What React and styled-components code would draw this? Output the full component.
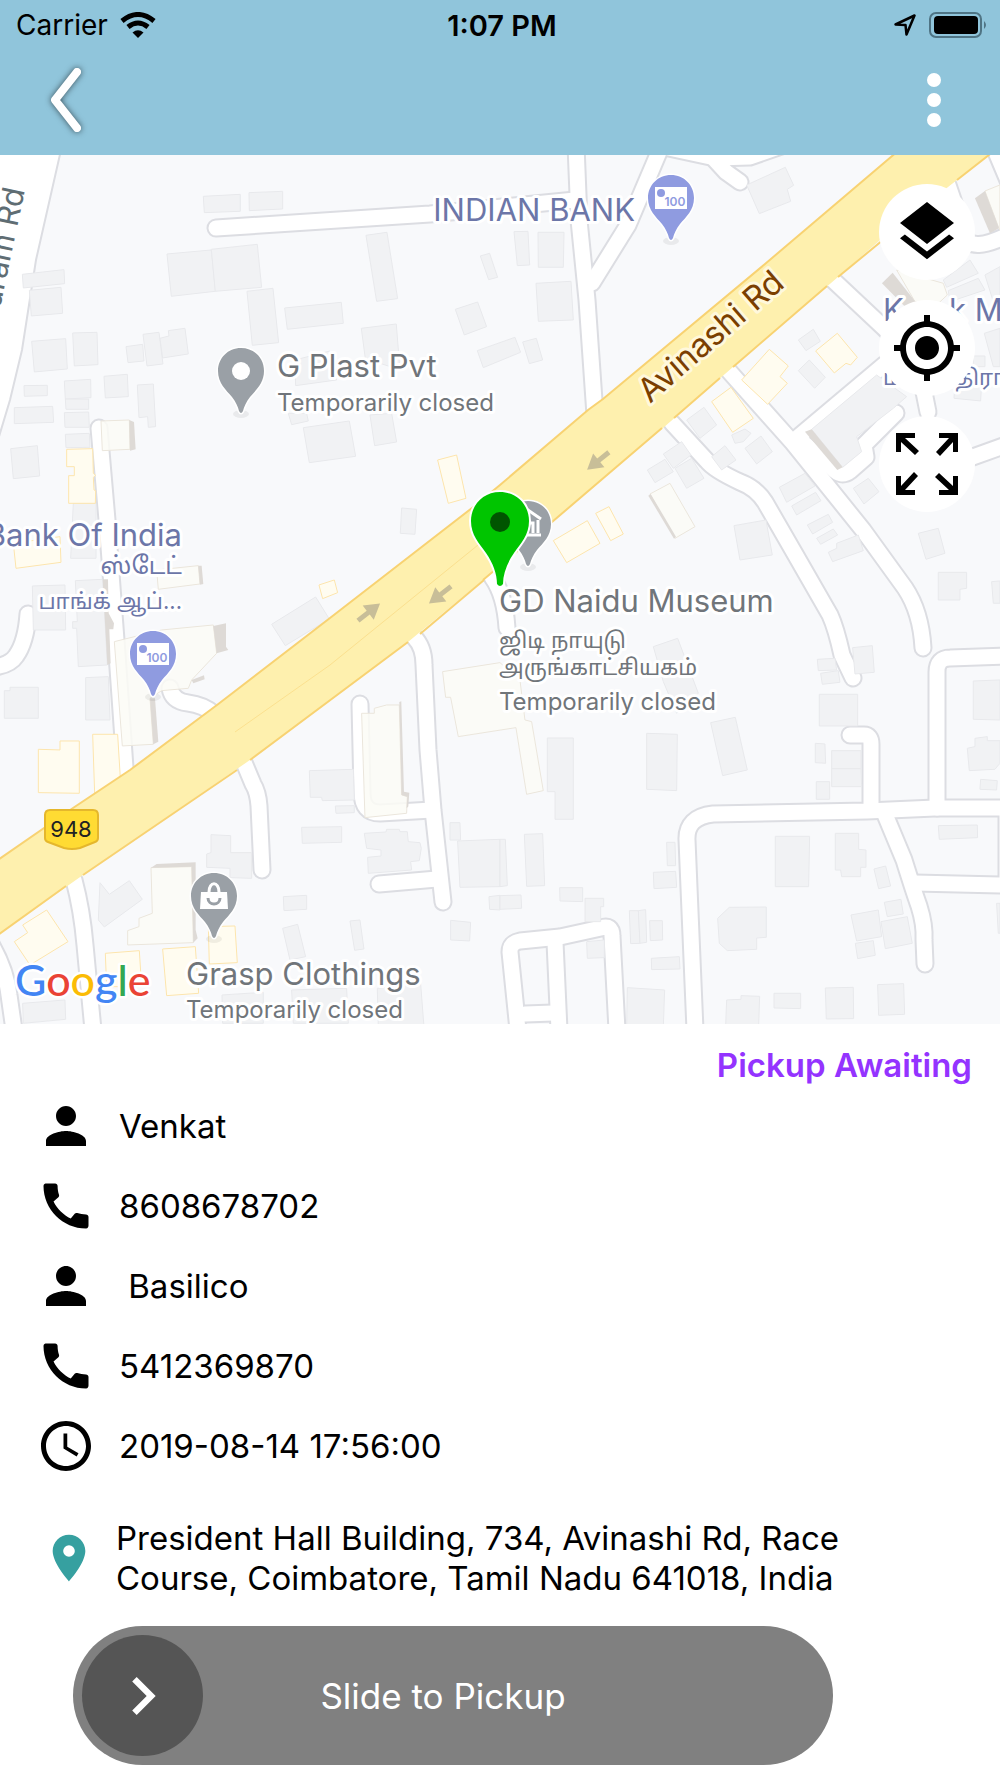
import React, { useState } from "react";
import styled, { createGlobalStyle } from "styled-components";

const GlobalStyle = createGlobalStyle`
  *, *::before, *::after { box-sizing: border-box; }
  body {
    margin: 0;
    background: #fff;
    color: #000;
    font-family: Inter, "Liberation Sans", sans-serif;
  }
`;

const Screen = styled.div`
  display: flex;
  flex-direction: column;
  background: #fff;
`;

const Header = styled.header`
  background: #90c5db;
`;

const StatusBar = styled.div`
  display: grid;
  grid-template-columns: 1fr auto 1fr;
  align-items: center;
  height: 50px;
  padding: 0 12px 0 16px;
  font-size: 28px;
`;

const StatusGroup = styled.div`
  display: flex;
  align-items: center;
  justify-content: ${(p) => (p.$end ? "flex-end" : "flex-start")};
  gap: 12px;
`;

const Clock = styled.time`
  font-size: 29px;
  font-weight: 600;
`;

const NavBar = styled.nav`
  display: flex;
  align-items: center;
  justify-content: space-between;
  height: 105px;
  padding: 0 32px 5px;
`;

const NavButton = styled.button`
  display: flex;
  align-items: center;
  justify-content: center;
  width: 68px;
  height: 84px;
  padding: 0;
  border: 0;
  background: none;
`;

const MapPanel = styled.section`
  position: relative;
  line-height: 0;
`;

const MapCanvas = styled.svg`
  display: block;
  width: 100%;
  height: auto;
  background: #f8f9fb;
`;

const MapControls = styled.div`
  position: absolute;
  top: 29px;
  right: 25px;
  display: flex;
  flex-direction: column;
  gap: 20px;
`;

const RoundButton = styled.button`
  display: flex;
  align-items: center;
  justify-content: center;
  width: 96px;
  height: 96px;
  padding: 0;
  border: 0;
  border-radius: 50%;
  background: #fff;
`;

const MapLabel = styled.text`
  font-family: Inter, "Noto Sans Tamil", "Noto Sans", sans-serif;
  font-size: ${(p) => p.$size || 31}px;
  fill: ${(p) => p.$color || "#70757a"};
  stroke: ${(p) => p.$halo || "#fff"};
  stroke-width: ${(p) => (p.$halo === "none" ? 0 : 6)}px;
  stroke-linejoin: round;
  paint-order: stroke;
`;

const LogoText = styled.text`
  font-family: Lato, sans-serif;
  font-size: 43px;
  font-weight: 500;
  stroke: #fff;
  stroke-width: 5px;
  stroke-linejoin: round;
  paint-order: stroke;
`;

const Details = styled.main`
  display: flex;
  flex-direction: column;
  padding-top: 20px;
`;

const TripStatus = styled.p`
  margin: 0;
  padding-right: 28px;
  font-size: 33px;
  font-weight: 600;
  line-height: 42px;
  text-align: right;
  color: #9433ff;
`;

const InfoList = styled.ul`
  margin: 0;
  padding: 0 36px;
  list-style: none;
`;

const InfoRow = styled.li`
  display: flex;
  align-items: center;
  gap: 23px;
  height: 80px;
  font-size: 33px;
  white-space: pre;
`;

const Address = styled.address`
  display: flex;
  align-items: center;
  gap: 19px;
  padding: 32px 100px 28px 41px;
  font-size: 33px;
  font-style: normal;
  line-height: 40px;
`;

const AddressText = styled.span`
  flex: 1;
  max-width: 760px;
`;

const Icon = styled.svg`
  flex: none;
  width: ${(p) => p.$size}px;
  height: ${(p) => p.$size}px;
  fill: ${(p) => p.$color || "#000"};
`;

const SlideTrack = styled.div`
  position: relative;
  display: flex;
  align-items: center;
  height: 139px;
  margin: 0 167px 13px 73px;
  padding: 9px;
  border-radius: 70px;
  background: #808080;
`;

const SlideInput = styled.input`
  appearance: none;
  width: 100%;
  height: 121px;
  margin: 0;
  background: transparent;

  &::-webkit-slider-thumb {
    appearance: none;
    width: 121px;
    height: 121px;
    border: 0;
    border-radius: 50%;
    background: #555;
  }
`;

const SlideLabel = styled.label`
  position: absolute;
  inset: 0 20px 0 0;
  display: flex;
  align-items: center;
  justify-content: center;
  font-size: 35px;
  color: #fff;
  pointer-events: none;
`;

const KnobTravel = styled.div`
  position: absolute;
  inset: 9px 130px 9px 9px;
  pointer-events: none;
`;

const KnobArrow = styled.div`
  position: absolute;
  top: 0;
  display: flex;
  align-items: center;
  justify-content: center;
  width: 121px;
  height: 121px;
`;

const ICONS = {
  person:
    "M12 12c2.21 0 4-1.79 4-4s-1.79-4-4-4-4 1.79-4 4 1.79 4 4 4zm0 2c-2.67 0-8 1.34-8 4v2h16v-2c0-2.66-5.33-4-8-4z",
  phone:
    "M20.01 15.38c-1.23 0-2.42-.2-3.53-.56a.977.977 0 0 0-1.01.24l-1.57 1.97c-2.83-1.35-5.48-3.9-6.89-6.83l1.95-1.66c.27-.28.35-.67.24-1.02-.37-1.11-.56-2.3-.56-3.53 0-.54-.45-.99-.99-.99H4.19C3.65 3 3 3.24 3 3.99 3 13.28 10.73 21 20.01 21c.71 0 .99-.63.99-1.18v-3.45c0-.54-.45-.99-.99-.99z",
  clock:
    "M11.99 2C6.47 2 2 6.48 2 12s4.47 10 9.99 10C17.52 22 22 17.52 22 12S17.52 2 11.99 2zM12 20c-4.42 0-8-3.58-8-8s3.58-8 8-8 8 3.58 8 8-3.58 8-8 8zm.5-13H11v6l5.25 3.15.75-1.23-4.5-2.67z",
  place:
    "M12 2C8.13 2 5 5.13 5 9c0 5.25 7 13 7 13s7-7.75 7-13c0-3.87-3.13-7-7-7zm0 9.5a2.5 2.5 0 0 1 0-5 2.5 2.5 0 0 1 0 5z",
  chevron: "M10 6L8.59 7.41 13.17 12l-4.58 4.59L10 18l6-6z",
  layers:
    "M11.99 18.54l-7.37-5.73L3 14.07l9 7 9-7-1.63-1.27-7.38 5.74zM12 16l7.36-5.73L21 9l-9-7-9 7 1.63 1.27L12 16z",
  target:
    "M12 8c-2.21 0-4 1.79-4 4s1.79 4 4 4 4-1.79 4-4-1.79-4-4-4zm8.94 3A8.994 8.994 0 0 0 13 3.06V1h-2v2.06A8.994 8.994 0 0 0 3.06 11H1v2h2.06A8.994 8.994 0 0 0 11 20.94V23h2v-2.06A8.994 8.994 0 0 0 20.94 13H23v-2h-2.06zM12 19c-3.87 0-7-3.13-7-7s3.13-7 7-7 7 3.13 7 7-3.13 7-7 7z",
};

const Glyph = ({ name, size, color }) => (
  <Icon viewBox="0 0 24 24" $size={size} $color={color} aria-hidden="true">
    <path d={ICONS[name]} />
  </Icon>
);

const ROADS = [
  "M216 228L430 214L575 200",
  "M576 145L579 220L587 300L595 415",
  "M662 145L628 225L592 283",
  "M655 145L715 158L750 157L790 143",
  "M715 160L726 172L740 182",
  "M672 423L707 461Q714 470 740 482Q756 488 765 502L795 554L830 615Q836 628 842 655L853 678",
  "M728 370L793 443L863 530L905 588Q921 612 923 648",
  "M833 280L883 327L918 362L928 412",
  "M797 438L885 364",
  "M800 440L832 468Q841 478 850 471L866 457L864 445L896 413",
  "M970 458L1006 445",
  "M948 185L966 238Q972 252 1006 236",
  "M996 152L1012 190",
  "M99 428L107 520L116 640L126 782",
  "M28 614Q26 642 16 656Q10 665 -6 667",
  "M170 688Q172 701 188 703Q204 705 214 714",
  "M414 637Q424 647 424 665L428 750L433 810L443 902",
  "M360 704L362 792Q362 813 380 813L432 810",
  "M379 884L437 879",
  "M243 760L253 784Q258 792 259 806L262 870",
  "M74 880Q82 910 85 945L93 1030",
  "M-9 944Q6 970 9 995L14 1030",
  "M695 1030L687 840Q686 817 713 814L867 811L935 808L1006 808",
  "M850 735H864Q871 735 871 744V808",
  "M937 808V672Q937 658 950 658L1006 656",
  "M884 812L904 860Q914 892 919 906Q925 925 924 940L925 964",
  "M915 883L1000 885Q1007 885 1007 878V810",
  "M518 1030L510 952Q510 943 520 941L560 937L601 928Q612 924 612 936L617 1030",
  "M555 942L559 1030",
  "M525 1014L553 1013",
  "M492 577Q505 595 507 628",
];

const TILES = [
  {
    x: 0,
    y: 0,
    grey: [
      "610,589 721,583 721,634 613,638", "747,578 848,574 848,627 748,632",
      "501,762 634,750 646,874 514,889", "634,748 772,733 785,862 646,874",
      "741,874 819,865 836,1028 757,1036", "854,924 1024,907 1030,970 862,988",
      "1098,706 1161,697 1193,896 1130,904", "1084,985 1189,972 1200,1110 1096,1075",
      "1366,928 1433,906 1460,980 1393,1005", "1441,768 1469,760 1493,832 1466,839",
      "1432,1052 1545,1012 1562,1057 1450,1103", "67,823 192,809 194,851 70,864",
      "88,871 183,862 188,940 94,948", "95,1024 197,1016 202,1107 103,1116",
      "218,999 291,997 294,1094 223,1098", "378,1040 428,1033 432,1083 384,1088",
      "429,1003 477,997 489,1092 441,1098", "480,1015 507,1008 505,992 555,985 565,1062 488,1074",
      "72,1157 142,1156 142,1187 73,1189", "312,1129 382,1123 385,1190 316,1194",
      "885,1080 990,1053 1010,1140 887,1157",
    ],
  },
  {
    x: 500,
    y: 0,
    grey: [
      "42,695 84,694 89,795 52,797", "114,697 192,697 190,802 115,802",
      "108,850 213,844 220,960 115,964", "68,1026 109,1015 128,1080 88,1091",
      "740,555 856,502 881,556 862,568 872,604 778,641", "895,1020 940,988 961,1024 918,1052",
      "895,1112 928,1080 976,1132 944,1165", "1330,840 1410,780 1435,820 1340,862",
      "1345,872 1435,835 1455,870 1350,905", "1455,825 1500,800 1500,925 1480,905",
      "1453,1000 1500,985 1500,1100 1480,1100", "1420,1068 1455,1068 1455,1100 1420,1100",
      "1365,1150 1445,1150 1442,1203 1362,1195",
    ],
    yellow: [
      "947,1053 1012,1000 1072,1072 1052,1095 1038,1090 1003,1119",
      "725,1140 808,1048 865,1098 840,1130 862,1150 803,1213",
    ],
    beige: ["1455,573 1500,555 1500,690 1497,685", "1190,810 1330,850 1342,885 1310,915 1245,905"],
    shade: ["1425,595 1455,573 1497,685 1470,700", "1146,850 1178,818 1250,910 1225,930"],
  },
  {
    x: 0,
    y: 380,
    grey: [
      "193,3 272,-2 273,53 196,57", "196,57 266,57 266,88 198,88", "43,83 158,79 161,127 43,131",
      "193,98 266,96 268,142 195,142", "412,15 460,12 467,140 445,142 443,110 417,113",
      "196,163 268,160 270,202 198,203", "32,206 112,197 119,288 40,296",
      "220,370 288,370 288,535 212,535", "865,100 920,100 925,123 875,134",
      "910,143 1048,123 1067,229 928,248", "1110,105 1175,100 1190,186 1124,197",
      "1205,384 1250,388 1245,463 1201,460", "815,733 947,651 988,717 856,797",
      "97,618 195,615 197,750 100,750", "257,893 325,890 330,1020 257,1020",
      "13,932 30,932 30,922 115,922 115,1015 13,1015",
      "226,602 308,598 322,855 235,860 230,745 218,745 218,725 232,725",
    ],
    yellow: [
      "200,208 278,206 280,280 287,286 280,292 282,330 287,332 286,370 206,370 206,287 223,287 223,260 200,260",
      "1313,240 1370,225 1398,355 1345,370", "957,615 1003,600 1013,638 968,656",
      "40,490 180,470 183,547 48,565", "278,1063 353,1063 365,1260 286,1300",
      "115,1108 180,1110 180,1083 238,1083 238,1240 115,1238",
    ],
    beige: [
      "303,123 388,120 390,208 307,212", "470,570 595,557 600,612 475,628",
      "343,785 485,750 640,735 650,820 575,900 565,925 485,932 450,955 460,1093 367,1098",
      "1085,1000 1123,1000 1123,985 1160,975 1198,975 1205,1245 1222,1250 1220,1300 1095,1313",
      "1328,875 1500,848 1560,900 1575,1020 1595,1025 1630,1232 1580,1243 1548,1043 1375,1070 1352,952 1337,952",
    ],
    shade: [
      "388,120 402,126 407,208 390,212", "595,557 605,557 610,612 600,614",
      "640,738 678,730 678,800 685,810 650,820", "450,955 465,955 475,1085 460,1093",
      "1198,966 1204,964 1212,1235 1228,1238 1225,1280 1220,1285 1222,1250 1205,1245",
      "575,900 612,886 614,898 580,910", "308,598 324,598 326,700 342,730 340,748 328,748 332,850 322,855",
    ],
  },
  {
    x: 500,
    y: 380,
    grey: [
      "560,120 612,82 650,135 600,175", "695,165 735,147 753,160 730,185 705,190",
      "735,205 783,168 817,215 770,252", "635,230 675,197 708,240 665,270",
      "490,222 545,185 573,225 520,265", "442,270 495,238 520,275 465,308",
      "525,265 575,235 612,295 560,325", "702,437 798,420 817,525 720,540",
      "838,322 915,280 945,318 860,367", "875,378 947,337 963,362 890,405",
      "922,435 985,403 998,427 938,462", "950,475 1000,447 1013,465 962,493",
      "985,517 1010,505 1010,490 1075,465 1090,512 998,545", "1060,325 1105,295 1137,335 1092,372",
      "1255,460 1315,445 1335,520 1278,538", "1315,577 1400,577 1400,625 1380,628 1380,660 1315,660",
      "1475,605 1500,603 1500,670 1480,670", "952,838 1005,835 1010,870 955,872",
      "962,880 1015,872 1020,907 967,913", "1058,803 1117,797 1123,877 1065,882",
      "958,943 1073,943 1073,1038 958,1038", "460,800 533,775 595,940 530,1000 490,905",
      "632,1028 706,1012 742,1170 668,1187", "440,1060 532,1063 530,1232 440,1228",
      "142,1074 220,1074 220,1318 165,1318 165,1235 142,1235", "946,1090 975,1092 977,1150 946,1148",
      "995,1112 1083,1112 1083,1166 995,1166", "995,1166 1083,1166 1085,1220 995,1220",
      "1420,903 1500,900 1500,1020 1420,1018",
      "1402,1105 1425,1100 1425,1075 1462,1070 1462,1082 1500,1082 1500,1150 1485,1168 1408,1172",
      "935,148 1130,-15 1220,50 1180,85 1070,170 1085,215 1028,262",
    ],
    yellow: [
      "635,65 693,22 760,115 698,157", "160,482 262,422 300,490 200,548",
      "287,400 327,380 370,462 332,482",
    ],
    beige: ["450,342 510,310 585,440 525,475"],
    shade: ["445,347 452,342 528,470 522,476", "915,155 935,148 1028,262 1012,270"],
  },
  {
    x: 0,
    y: 740,
    grey: [
      "300,428 328,463 388,422 427,478 313,561 295,540",
      "633,284 692,287 692,338 755,338 755,415 690,413 690,385 620,382 620,342 633,338",
      "928,92 1060,88 1063,180 967,182 965,172 931,172", "1006,198 1063,197 1063,218 1008,220",
      "905,262 1025,260 1025,307 907,310",
      "1093,280 1158,276 1160,268 1198,268 1200,275 1222,275 1225,305 1260,308 1264,325 1258,362 1232,365 1235,390 1105,400 1103,352 1143,348 1143,330 1100,325",
      "1350,248 1380,248 1382,300 1350,300", "1373,303 1500,298 1500,440 1380,442",
      "850,470 920,466 920,508 852,512", "848,565 893,553 917,650 870,660",
      "1050,543 1080,540 1092,627 1064,631", "1352,541 1412,547 1409,603 1352,600",
      "1467,470 1500,466 1500,510 1469,508", "68,790 195,780 197,838 70,850",
      "666,765 790,757 790,850 668,850", "875,750 1040,745 1045,850 880,850",
      "1132,745 1262,730 1272,860 1135,860",
    ],
    yellow: [
      "68,555 140,510 204,605 90,675 43,605 83,578", "316,640 418,632 425,740 320,740",
      "488,627 586,620 596,760 500,767", "625,560 705,558 712,668 628,672",
    ],
    beige: ["453,383 575,380 580,608 383,615 383,572 417,560 417,535 457,520"],
    shade: ["453,383 470,372 587,367 587,570 593,595 580,608 575,380"],
  },
  {
    x: 500,
    y: 740,
    grey: [
      "0,298 16,298 22,437 0,440", "73,283 128,281 134,437 80,439", "0,467 63,465 65,505 0,508",
      "179,443 248,443 248,485 180,483", "255,475 311,475 311,500 302,500 302,545 255,545",
      "500,307 525,307 527,377 502,377", "460,397 527,394 530,442 462,446",
      "388,512 415,512 420,610 392,611", "415,512 437,509 440,607 420,610",
      "449,542 487,542 488,600 451,602", "260,605 313,600 313,653 262,655",
      "454,655 538,650 540,687 455,689", "382,743 494,750 490,860 380,860",
      "826,289 929,289 926,440 826,440",
      "1006,280 1076,280 1076,328 1098,330 1098,382 1082,382 1082,410 1025,410 1022,390 1006,390",
      "1122,387 1157,378 1172,438 1136,446", "1053,525 1135,510 1145,590 1070,603",
      "1153,487 1203,478 1210,522 1162,530", "1143,545 1222,530 1237,610 1156,626",
      "1066,610 1120,602 1126,646 1073,656",
      "653,535 688,502 799,501 799,592 770,594 770,628 682,632 658,610",
      "680,780 723,778 723,767 779,769 776,860 677,860", "822,760 902,760 902,806 822,804",
      "976,744 1060,742 1061,836 979,837", "1133,734 1211,731 1214,823 1136,826",
      "1315,257 1432,255 1433,293 1318,298", "949,125 989,125 989,178 949,178",
      "1442,118 1492,122 1490,150 1440,148", "1490,490 1500,490 1500,580 1495,580",
    ],
  },
];

const FOOTPRINT = {
  grey: { fill: "#f1f2f4", stroke: "#e8e9ec" },
  yellow: { fill: "#fffcf0", stroke: "#fde5ad" },
  beige: { fill: "#fcfbf6", stroke: "#ebe6dc" },
  shade: { fill: "#dedad6", stroke: "none" },
};

const HIGHWAY_TOP = "M-5 862L73 808L130 770L217 705L330 618L472 508L500 485L588 410L603 399L765 264L898 151";
const HIGHWAY_BOTTOM = "L994 151L957 180L880 240L838 277L733 367L663 428L552 522L483 580L408 642L250 760L83 875L-5 937";
const HIGHWAY_EDGE = "M994 151L957 180M940 193L838 277M827 286L733 367M720 378L674 418M662 428L552 522L483 580M484 580L420 634M408 642L250 760M237 770L83 875M66 886L-5 937";

function Pin({ x, y, color, children }) {
  return (
    <g transform={`translate(${x} ${y})`}>
      <ellipse cx="0" cy="43" rx="8" ry="4" fill="#000" opacity="0.06" />
      <path
        d="M0-23C-13-23-23-13-23 0C-23 12-15 19-9 26C-5 31-3 36-2 40Q0 44 2 40C3 36 5 31 9 26C15 19 23 12 23 0C23-13 13-23 0-23Z"
        fill={color}
        stroke="#fff"
        strokeWidth="3"
        paintOrder="stroke"
      />
      {children}
    </g>
  );
}

function BankPin({ x, y }) {
  return (
    <Pin x={x} y={y} color="#8f9be0">
      <rect x="-16" y="-11" width="32" height="22" fill="#fff" />
      <circle cx="-10" cy="-5" r="4" fill="#8f9be0" />
      <MapLabel x="4" y="8" $size={12} $color="#8f9be0" $halo="none" textAnchor="middle" fontWeight="600">
        100
      </MapLabel>
    </Pin>
  );
}

const Arrow = ({ x, y, angle }) => (
  <path
    transform={`translate(${x} ${y}) rotate(${angle})`}
    d="M-14-2.500H-1V-9L14 0L-1 9V2.500H-14Z"
    fill="#c8be98"
  />
);

function CityMap() {
  return (
    <MapCanvas viewBox="0 155 1000 869" role="img" aria-label="Map around Avinashi Rd">
      <path d="M-5 150H61L36 260L22 350L10 400L-5 450Z" fill="#fff" stroke="#dcdde2" strokeWidth="2" />
      <g fill="none" strokeLinecap="round" strokeLinejoin="round">
        <g stroke="#dcdde2" strokeWidth="19">
          {ROADS.map((d) => <path key={d} d={d} />)}
        </g>
        <g stroke="#fff" strokeWidth="15">
          {ROADS.map((d) => <path key={d} d={d} />)}
        </g>
      </g>
      {TILES.map((tile) => (
        <g key={`${tile.x}-${tile.y}`} transform={`translate(${tile.x} ${tile.y}) scale(0.3333)`} strokeWidth="3">
          {Object.keys(FOOTPRINT).map((kind) => (
            <g key={kind} {...FOOTPRINT[kind]} fillOpacity={kind === "beige" ? 0.85 : 1}>
              {(tile[kind] || []).map((points) => <polygon key={points} points={points} />)}
            </g>
          ))}
        </g>
      ))}
      <path d={`${HIGHWAY_TOP}${HIGHWAY_BOTTOM}Z`} fill="#fef0ae" />
      <path d={HIGHWAY_TOP} fill="none" stroke="#f8d272" strokeWidth="2" />
      <path d={HIGHWAY_EDGE} fill="none" stroke="#f8d272" strokeWidth="2" />
      <path d="M235 732L330 665L478 545" fill="none" stroke="#fbe08f" strokeWidth="1" />
      <Arrow x={598} y={461} angle={141} />
      <Arrow x={369} y={612} angle={-38} />
      <Arrow x={440} y={595} angle={142} />

      <path
        d="M50 810H93Q98 810 98 815V838Q98 841 95 842L80 848Q72 850 64 848L48 842Q45 841 45 838V815Q45 810 50 810Z"
        fill="#ffdb33"
        stroke="#e5b72c"
        strokeWidth="2"
      />
      <MapLabel x="71" y="837" $size={22} $color="#202124" $halo="none" textAnchor="middle">948</MapLabel>

      <MapLabel x="650" y="404" $size={33} $color="#7b3f00" $halo="#fff8dc" transform="rotate(-41 650 404)">Avinashi Rd</MapLabel>
      <MapLabel x="25" y="190" $color="#5f6d73" textAnchor="end" transform="rotate(-78 25 190)">aram Rd</MapLabel>

      <MapLabel x="635" y="221" $color="#6c76a8" textAnchor="end">INDIAN BANK</MapLabel>
      <BankPin x={671} y={198} />
      <MapLabel x="182" y="546" $color="#6c76a8" textAnchor="end">Bank Of India</MapLabel>
      <MapLabel x="182" y="574" $size={24} $color="#6c76a8" textAnchor="end">ஸ்டேட்</MapLabel>
      <MapLabel x="182" y="609" $size={22} $color="#6c76a8" textAnchor="end">பாங்க் ஆப்...</MapLabel>
      <BankPin x={153} y={654} />
      <MapLabel x="883" y="321" $color="#6c76a8">K</MapLabel>
      <MapLabel x="949" y="321" $color="#6c76a8">k M</MapLabel>
      <MapLabel x="883" y="385" $size={22} $color="#6c76a8">ம</MapLabel>
      <MapLabel x="955" y="385" $size={22} $color="#6c76a8">திரா</MapLabel>

      <Pin x={241} y={371} color="#9aa0a6"><circle r="9" fill="#fff" /></Pin>
      <MapLabel x="277" y="377">G Plast Pvt</MapLabel>
      <MapLabel x="277" y="411" $size={24}>Temporarily closed</MapLabel>

      <Pin x={528} y={524} color="#9aa0a6">
        <path d="M-13-5L0-14L13-5M-10-4V9M10-4V9M-13 11H13M-5 9V-1H5V9" fill="none" stroke="#fff" strokeWidth="3" />
      </Pin>
      <MapLabel x="499" y="612">GD Naidu Museum</MapLabel>
      <MapLabel x="499" y="648" $size={22}>ஜிடி நாயுடு</MapLabel>
      <MapLabel x="499" y="675" $size={22}>அருங்காட்சியகம்</MapLabel>
      <MapLabel x="499" y="710" $size={24}>Temporarily closed</MapLabel>

      <Pin x={214} y={896} color="#9aa0a6">
        <path d="M-13-4H13L14 13H-14Z" fill="#fff" />
        <path d="M-5-4C-5-15 5-15 5-4" fill="none" stroke="#fff" strokeWidth="3" />
        <path d="M-6 2C-6 10 6 10 6 2" fill="none" stroke="#9aa0a6" strokeWidth="3" />
      </Pin>
      <MapLabel x="186" y="985">Grasp Clothings</MapLabel>
      <MapLabel x="186" y="1018" $size={24}>Temporarily closed</MapLabel>

      <path
        d="M500 492C483 492 471 505 471 521C471 535 479 543 486 553C493 563 497 574 497 584Q500 588 503 584C503 574 507 563 514 553C521 543 529 535 529 521C529 505 517 492 500 492Z"
        fill="#00c500"
        stroke="#fff"
        strokeWidth="4"
        paintOrder="stroke"
      />
      <circle cx="500" cy="522" r="10" fill="#005500" />

      <LogoText x="15" y="996">
        <tspan fill="#4285f4">G</tspan>
        <tspan fill="#ea4335">o</tspan>
        <tspan fill="#fbbc05">o</tspan>
        <tspan fill="#4285f4">g</tspan>
        <tspan fill="#34a853">l</tspan>
        <tspan fill="#ea4335">e</tspan>
      </LogoText>
    </MapCanvas>
  );
}

const INFO = [
  { icon: "person", text: "Venkat" },
  { icon: "phone", text: "8608678702" },
  { icon: "person", text: " Basilico" },
  { icon: "phone", text: "5412369870" },
  { icon: "clock", text: "2019-08-14 17:56:00" },
];

export default function App() {
  const [progress, setProgress] = useState(0);

  return (
    <Screen>
      <GlobalStyle />
      <Header>
        <StatusBar>
          <StatusGroup>
            <span>Carrier</span>
            <svg width="36" height="26" viewBox="0 0 36 26" aria-label="Wi-Fi">
              <g fill="none" stroke="#000" strokeWidth="5">
                <path d="M2 9Q18-4 34 9" />
                <path d="M8 15Q18 7 28 15" />
              </g>
              <path d="M18 26L12.500 20.500Q18 16 23.500 20.500Z" />
            </svg>
          </StatusGroup>
          <Clock>1:07 PM</Clock>
          <StatusGroup $end>
            <svg width="22" height="22" viewBox="0 0 22 22" aria-label="Location">
              <path d="M1.500 10.500L20.500 1.500L12.500 20.500L11.500 11Z" fill="none" stroke="#000" strokeWidth="2.500" strokeLinejoin="round" />
            </svg>
            <svg width="60" height="28" viewBox="0 0 60 28" aria-label="Battery">
              <rect x="2" y="2" width="51" height="24" rx="6" fill="none" stroke="#4f7484" strokeWidth="2" />
              <rect x="6" y="5" width="44" height="18" rx="4" />
              <path d="M56 10Q60 14 56 18Z" fill="#4f7484" />
            </svg>
          </StatusGroup>
        </StatusBar>
        <NavBar>
          <NavButton type="button" aria-label="Back">
            <svg width="50" height="84" viewBox="0 0 50 84">
              <path
                d="M36 14L14 42L36 70"
                fill="none"
                stroke="#fff"
                strokeWidth="8"
                strokeLinecap="round"
                strokeLinejoin="round"
                filter="drop-shadow(0 0 3px rgba(0, 0, 0, 0.6))"
              />
            </svg>
          </NavButton>
          <NavButton type="button" aria-label="More options">
            <svg width="16" height="56" viewBox="0 0 16 56" fill="#fff">
              <circle cx="8" cy="8" r="7" />
              <circle cx="8" cy="28" r="7" />
              <circle cx="8" cy="48" r="7" />
            </svg>
          </NavButton>
        </NavBar>
      </Header>

      <MapPanel>
        <CityMap />
        <MapControls>
          <RoundButton type="button" aria-label="Map layers"><Glyph name="layers" size={72} /></RoundButton>
          <RoundButton type="button" aria-label="My location"><Glyph name="target" size={72} /></RoundButton>
          <RoundButton type="button" aria-label="Fit route">
            <Icon viewBox="0 0 72 72" $size={72} aria-hidden="true">
              {[0, 90, 180, 270].map((turn) => (
                <path
                  key={turn}
                  transform={`rotate(${turn} 36 36)`}
                  d="M5 5H24V10H14L28 23L24 27L10 14V24H5Z"
                />
              ))}
            </Icon>
          </RoundButton>
        </MapControls>
      </MapPanel>

      <Details>
        <TripStatus>Pickup Awaiting</TripStatus>
        <InfoList>
          {INFO.map((item) => (
            <InfoRow key={item.text}>
              <Glyph name={item.icon} size={60} />
              <span>{item.text}</span>
            </InfoRow>
          ))}
        </InfoList>
        <Address>
          <Glyph name="place" size={56} color="#36a0a0" />
          <AddressText>
            President Hall Building, 734, Avinashi Rd, Race Course, Coimbatore, Tamil Nadu 641018, India
          </AddressText>
        </Address>
        <SlideTrack>
          <SlideInput
            id="pickup"
            type="range"
            min="0"
            max="100"
            value={progress}
            onChange={(event) => setProgress(Number(event.target.value))}
          />
          <SlideLabel htmlFor="pickup">Slide to Pickup</SlideLabel>
          <KnobTravel>
            <KnobArrow style={{ left: `${progress}%` }}>
              <Glyph name="chevron" size={76} color="#fff" />
            </KnobArrow>
          </KnobTravel>
        </SlideTrack>
      </Details>
    </Screen>
  );
}
